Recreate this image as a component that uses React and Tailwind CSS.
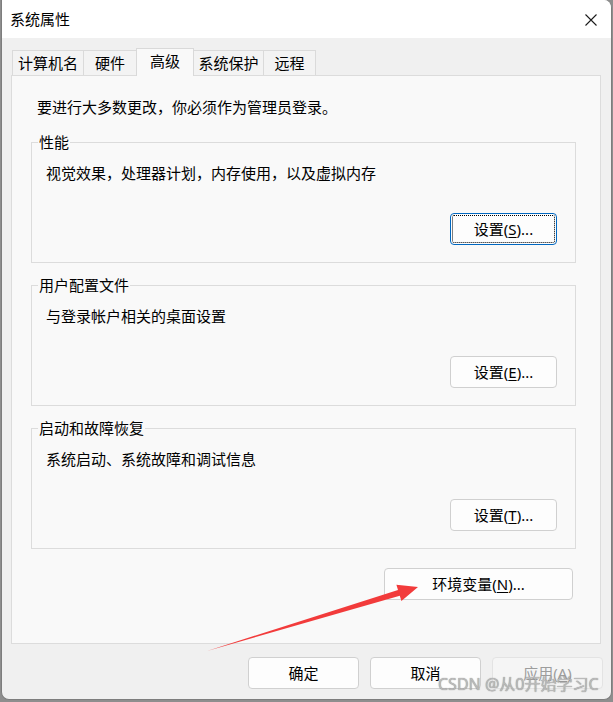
import React from 'react';

const FONT = "font-['Noto_Sans','Noto_Sans_CJK_SC',sans-serif]";

function Tab({ label, width, active, first }) {
  if (active) {
    return (
      <div className={`relative z-10 ${first ? '' : '-ml-px'} h-[28px] border border-b-0 border-[#d9d9d9] bg-[#f9f9f9] flex items-center justify-center pb-[3px] text-[15px] leading-[20px] text-black`} style={{ width }}>
        {label}
      </div>
    );
  }
  return (
    <div className={`${first ? '' : '-ml-px'} h-[25px] mb-[1px] border border-b-0 border-[#dadada] bg-[#f3f3f3] flex items-center justify-center text-[15px] leading-[20px] text-black`} style={{ width }}>
      {label}
    </div>
  );
}

function Button({ children, focused, disabled, className }) {
  let look = 'border border-[#d0d0d0] bg-[#fdfdfd] text-black';
  if (focused) look = 'border border-[#0067c0] bg-[#fdfdfd] text-black outline-1 outline-dotted outline-black outline-offset-[-3px]';
  if (disabled) look = 'border border-[#e3e3e3] bg-[#f5f5f5] text-[#9d9d9d]';
  return (
    <div className={`h-[32px] rounded-[4px] flex items-center justify-center text-[15px] leading-[20px] ${look} ${className}`}>
      {children}
    </div>
  );
}

function Group({ title, text, children }) {
  return (
    <fieldset className="ml-[19px] w-[545px] border border-[#dcdcdc]">
      <legend className="ml-[6px] px-[1px] text-[15px] leading-[20px] text-black">{title}</legend>
      <div className="flex flex-col pt-[11px] pl-[14px] pr-[18px] pb-[17px]">
        <div className="text-[15px] leading-[20px] text-black">{text}</div>
        {children}
      </div>
    </fieldset>
  );
}

const Key = ({ k }) => <span className="underline underline-offset-2">{k}</span>;

export default function App() {
  return (
    <div className={`relative w-[613px] h-[702px] bg-[#8e8e8e] pl-[1px] overflow-hidden ${FONT}`}>
      <div className="w-[611px] h-[700px] bg-[#f0f0f0] border-x border-b border-[#7d7d7d] rounded-tr-[8px] rounded-b-[8px] overflow-hidden flex flex-col">
        {/* title bar */}
        <div className="h-[38px] shrink-0 bg-white flex items-center justify-between pl-[8px] pr-[14px]">
          <span className="text-[15px] leading-[20px] text-black">系统属性</span>
          <svg width="12" height="12" viewBox="0 0 12 12" className="mt-[1px]">
            <path d="M0.5 0.5 L11.5 11.5 M11.5 0.5 L0.5 11.5" stroke="#1b1b1b" strokeWidth="1.1" fill="none" />
          </svg>
        </div>

        {/* tabs */}
        <div className="relative z-10 mt-[10px] -mb-px ml-[10px] h-[28px] flex items-end">
          <Tab label="计算机名" width={72} first />
          <Tab label="硬件" width={54} />
          <Tab label="高级" width={58} active />
          <Tab label="系统保护" width={71} />
          <Tab label="远程" width={53} />
        </div>

        {/* tab panel */}
        <div className="ml-[9px] w-[590px] h-[569px] shrink-0 border border-[#dcdcdc] bg-[#f9f9f9] flex flex-col">
          <div className="mt-[21px] ml-[25px] text-[15px] leading-[20px] text-black">要进行大多数更改，你必须作为管理员登录。</div>

          <div className="mt-[15px]">
            <Group title="性能" text="视觉效果，处理器计划，内存使用，以及虚拟内存">
              <Button focused className="self-end mt-[30px] w-[107px]">设置(<Key k="S" />)...</Button>
            </Group>
          </div>

          <div className="mt-[12px]">
            <Group title="用户配置文件" text="与登录帐户相关的桌面设置">
              <Button className="self-end mt-[30px] w-[107px]">设置(<Key k="E" />)...</Button>
            </Group>
          </div>

          <div className="mt-[12px]">
            <Group title="启动和故障恢复" text="系统启动、系统故障和调试信息">
              <Button className="self-end mt-[30px] w-[107px]">设置(<Key k="T" />)...</Button>
            </Group>
          </div>

          <Button className="self-end mt-[19px] mr-[27px] w-[189px]">环境变量(<Key k="N" />)...</Button>
        </div>

        {/* dialog buttons */}
        <div className="mt-[13px] pr-[8px] flex justify-end gap-[11px]">
          <Button className="w-[111px]">确定</Button>
          <Button className="w-[111px]">取消</Button>
          <Button disabled className="w-[111px]">应用(<Key k="A" />)</Button>
        </div>
      </div>

      {/* annotation arrow */}
      <svg className="absolute inset-0 pointer-events-none" width="613" height="702" viewBox="0 0 613 702">
        <polygon points="207,651 398,589.9 396.4,584.7 418,587 401.4,600.9 399.8,595.7" fill="#f23b3b" />
      </svg>

      {/* watermark */}
      <div className="absolute left-[438px] top-[674px] text-[16px] leading-[20px] text-[#b4b4b4] opacity-90 [text-shadow:0_0_1px_#6f6f6f] whitespace-nowrap">
        CSDN @从0开始学习C
      </div>
    </div>
  );
}
